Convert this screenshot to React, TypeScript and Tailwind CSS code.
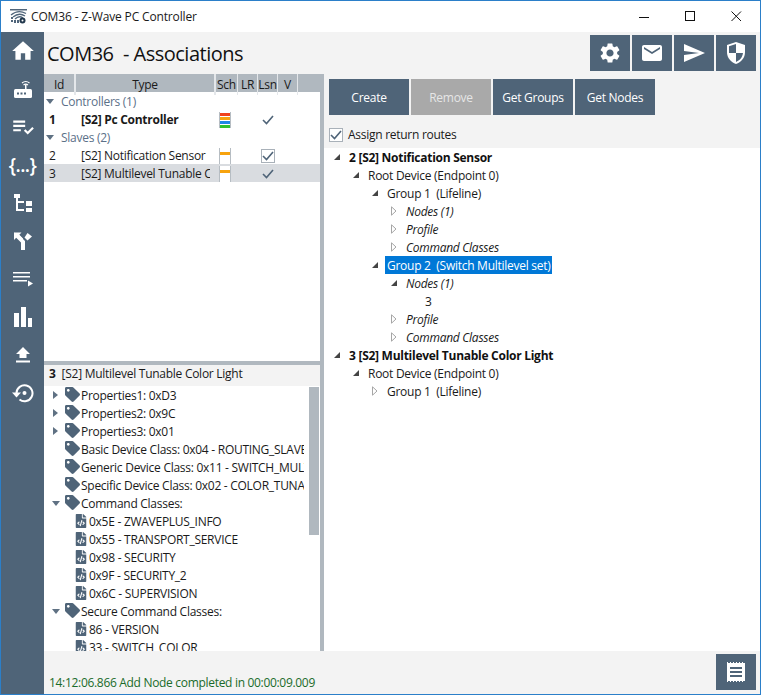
import React from 'react';
import { MdHome, MdPlaylistAddCheck, MdSettings, MdEmail, MdSend } from 'react-icons/md';
import { FaFileCode, FaTag } from 'react-icons/fa';

const FONT = "font-['Open_Sans','Noto_Sans',sans-serif]";

function Logo() {
  return (
    <svg width="17" height="15" viewBox="0 0 17 15" className="text-[#50657a]">
      <path d="M0 0h17v1.500H0z" fill="currentColor" />
      <path d="M1 6 Q8 0 16 4.500 M3 8 Q9 3 15 7 M5 10 Q9 6 13 9" stroke="currentColor" strokeWidth="1.300" fill="none" />
      <path d="M1 8h2v2H1zM1 11h2v2H1zM4 11h2v3H4zM7 11h2v3H7z" fill="currentColor" />
      <circle cx="12.500" cy="11.500" r="3" fill="#22384d" />
      <circle cx="12.500" cy="11.500" r="1" fill="white" />
    </svg>
  );
}

function TitleBar() {
  return (
    <div className="flex h-[31px] shrink-0 items-center bg-white">
      <div className="ml-[9px] mr-[4px] flex"><Logo /></div>
      <span className="text-[12px] tracking-[-0.15px] text-[#1a1a1a]">COM36 - Z-Wave PC Controller</span>
      <div className="ml-auto mr-[1px] flex">
        <svg width="46" height="31" viewBox="0 0 46 31"><path d="M18 16.500h10" stroke="#111" /></svg>
        <svg width="46" height="31" viewBox="0 0 46 31"><rect x="18.500" y="10.500" width="9" height="9" fill="none" stroke="#111" /></svg>
        <svg width="46" height="31" viewBox="0 0 46 31"><path d="M18.500 10.500l9.500 9.500m0-9.500l-9.500 9.500" stroke="#111" /></svg>
      </div>
    </div>
  );
}

function RouterIcon() {
  return (
    <svg width="18" height="18" viewBox="0 0 18 18" fill="white">
      <rect x="0" y="9" width="18" height="9" rx="1.500" />
      <path d="M3 12.500h2v2H3zM6.500 12.500h2v2h-2zM10 12.500h2v2h-2z" fill="#4f6478" />
      <rect x="11" y="4.500" width="1.500" height="4.500" />
      <path d="M8 3 Q11.700 0 15.500 3 M9.500 5 Q11.700 3.200 14 5" stroke="white" strokeWidth="1.100" fill="none" />
    </svg>
  );
}

function TreeIcon() {
  return (
    <svg width="18" height="18" viewBox="0 0 18 18" fill="white">
      <path d="M0 0h6v4H0zM2 4h2v13H2zM4 7h6v2H4zM4 15h6v2H4zM12 7h6v5h-6zM12 14h6v4h-6z" />
    </svg>
  );
}

function SplitIcon() {
  return (
    <svg width="18" height="18" viewBox="0 0 18 18" fill="white">
      <path d="M0 .500h7.500L5.300 2.700 9 6.400V18H7V7.500z" />
      <path d="M0 .500V8L2.200 5.800 7 10.500V18h4V9L4 2z" />
      <path d="M13.500 1 L18 4.500 L13.500 8.500 L10.500 5.500z" />
    </svg>
  );
}

function QueueIcon() {
  return (
    <svg width="20" height="15" viewBox="0 0 20 15" fill="white">
      <path d="M0 0h17v1.500H0zM0 4h17v1.500H0zM0 8h14v1.500H0z" />
      <path d="M15 8.500l5 3-5 3z" />
    </svg>
  );
}

function BarsIcon() {
  return (
    <svg width="18" height="20" viewBox="0 0 18 20" fill="white">
      <path d="M0 6h5v14H0zM7 0h5v20H7zM14 11h4v9h-4z" />
    </svg>
  );
}

function UploadIcon() {
  return (
    <svg width="14" height="16" viewBox="0 0 14 16" fill="white">
      <path d="M7 0l7 7h-3.500v4h-7V7H0z" />
      <path d="M0 13.500h14v2H0z" />
    </svg>
  );
}

function RestoreIcon() {
  return (
    <svg width="22" height="20" viewBox="0 0 22 20">
      <path d="M4.500 10 A8 8 0 1 1 7.500 16.500" stroke="white" strokeWidth="2" fill="none" />
      <path d="M0 9.500h9l-4.500 5z" fill="white" />
      <circle cx="12.500" cy="10" r="2" fill="white" />
    </svg>
  );
}

function Sidebar() {
  const cls = 'h-[38px] flex items-center justify-center';
  return (
    <div className="flex w-[43px] shrink-0 flex-col bg-[#4f6478] text-white">
      <div className={cls}><MdHome size={26} /></div>
      <div className={cls}><RouterIcon /></div>
      <div className={cls}><MdPlaylistAddCheck size={26} /></div>
      <div className={cls + ' text-[19px] font-semibold tracking-[-0.5px]'}>{'{...}'}</div>
      <div className={cls}><TreeIcon /></div>
      <div className={cls}><SplitIcon /></div>
      <div className={cls}><QueueIcon /></div>
      <div className={cls}><BarsIcon /></div>
      <div className={cls}><UploadIcon /></div>
      <div className={cls}><RestoreIcon /></div>
    </div>
  );
}

function ShieldIcon() {
  return (
    <svg width="20" height="24" viewBox="0 0 20 24">
      <path d="M10 1 L19 4 V11 C19 17 15 21 10 23 C5 21 1 17 1 11 V4 Z" fill="white" />
      <path d="M10 3 L3 5.300 V12 H10 Z M10 12 H17 C16.500 16.500 13.500 19.500 10 21 Z" fill="#4f6478" />
    </svg>
  );
}

function ReceiptIcon() {
  return (
    <svg width="18" height="20" viewBox="0 0 18 20">
      <path d="M0 1h18v18H0z" fill="white" />
      <path d="M0 0h1v1H0zM3 0h1v1H3zM6 0h1v1H6zM9 0h1v1H9zM12 0h1v1h-1zM15 0h1v1h-1zM0 19h1v1H0zM3 19h1v1H3zM6 19h1v1H6zM9 19h1v1H9zM12 19h1v1h-1zM15 19h1v1h-1z" fill="white" />
      <path d="M3 5h12v2H3zM3 9h12v2H3zM3 13h12v2H3z" fill="#4f6478" />
    </svg>
  );
}

function Header() {
  const btn = 'flex h-[36px] w-[40px] items-center justify-center bg-[#4f6478] text-white';
  return (
    <div className="flex h-[42px] shrink-0 items-start pl-[3px]">
      <h1 className="mt-[8px] whitespace-pre text-[20px] leading-[28px] tracking-[-0.5px] text-[#111]">COM36  - Associations</h1>
      <div className="ml-auto mr-[4px] mt-[3px] flex gap-[2px]">
        <div className={btn}><MdSettings size={24} /></div>
        <div className={btn}><MdEmail size={24} /></div>
        <div className={btn}><MdSend size={24} /></div>
        <div className={btn}><ShieldIcon /></div>
      </div>
    </div>
  );
}

function Check({ boxed }: { boxed?: boolean }) {
  const mark = (
    <svg width="12" height="10" viewBox="0 0 12 10">
      <path d="M1 5 L4.500 8.500 L11 1" stroke="#4f6478" strokeWidth="1.600" fill="none" />
    </svg>
  );
  if (boxed) return <span className="flex h-[14px] w-[14px] items-center justify-center border border-[#a9b1b9] bg-white">{mark}</span>;
  return mark;
}

function Signal({ full }: { full?: boolean }) {
  return (
    <span className="flex h-[16px] w-[12px] flex-col gap-[1px] border-x border-[#b6bdc3] bg-white pt-[1px]">
      {full ? (
        <>
          <i className="h-[3px] bg-[#f0421c]" />
          <i className="h-[3px] bg-[#f7a30f]" />
          <i className="h-[3px] bg-[#1e88e5]" />
          <i className="h-[3px] bg-[#2fc12f]" />
        </>
      ) : (
        <i className="mt-[3px] h-[3px] bg-[#f7a30f]" />
      )}
    </span>
  );
}

const cols = 'grid grid-cols-[32px_140px_22px_20px_20px_20px_1fr]';

function GroupRow({ label }: { label: string }) {
  return (
    <div className="flex h-[18px] items-center text-[#5b7088]">
      <svg width="8" height="5" viewBox="0 0 8 5" className="ml-[2px] mr-[7px]"><path d="M0 0h8L4 5z" fill="#5f7183" /></svg>
      <span className="pt-[1px]">{label}</span>
    </div>
  );
}

function DeviceRow({ id, name, bold, full, boxed, selected }: { id: string; name: string; bold?: boolean; full?: boolean; boxed?: boolean; selected?: boolean }) {
  return (
    <div className={`${cols} h-[18px] items-center ${selected ? 'bg-[#d9dce0]' : ''} ${bold ? 'font-bold' : ''} text-[#1a1a1a]`}>
      <span className="pl-[5px] pt-[1px]">{id}</span>
      <span className="overflow-hidden whitespace-nowrap pl-[5px] pt-[1px]"><span className="block w-[129px] overflow-hidden">{name}</span></span>
      <span className="flex justify-start pl-[3px]"><Signal full={full} /></span>
      <span />
      <span className="flex justify-center"><Check boxed={boxed} /></span>
      <span />
    </div>
  );
}

function DeviceTable() {
  return (
    <div className="min-h-0 flex-1 bg-white">
      <div className={`${cols} h-[18px] items-stretch bg-[#b0b8bf] text-center leading-[21px] text-[#1a1a1a]`}>
        <span className="border-r-2 border-[#e4e7ea]">Id</span>
        <span className="border-r-2 border-[#e4e7ea]">Type</span>
        <span className="border-r border-[#e4e7ea]">Sch</span>
        <span className="border-r border-[#e4e7ea]">LR</span>
        <span className="border-r border-[#e4e7ea]">Lsn</span>
        <span className="border-r border-[#e4e7ea]">V</span>
        <span />
      </div>
      <GroupRow label="Controllers (1)" />
      <DeviceRow id="1" name="[S2] Pc Controller" bold full />
      <GroupRow label="Slaves (2)" />
      <DeviceRow id="2" name="[S2] Notification Sensor" boxed />
      <DeviceRow id="3" name="[S2] Multilevel Tunable Color Light" selected />
    </div>
  );
}

function PropRow({ label, arrow }: { label: string; arrow?: 'right' | 'down' }) {
  return (
    <div className="flex h-[18px] items-center">
      <span className="flex w-[21px] shrink-0 justify-center pl-[2px]">
        {arrow === 'right' && <svg width="5" height="8" viewBox="0 0 5 8"><path d="M0 0l5 4-5 4z" fill="#5f7183" /></svg>}
        {arrow === 'down' && <svg width="8" height="5" viewBox="0 0 8 5"><path d="M0 0h8L4 5z" fill="#5f7183" /></svg>}
      </span>
      <FaTag size={15} className="mb-[2px] mr-[1px] shrink-0 text-[#4f6478]" />
      <span className="whitespace-nowrap pt-[2px] text-[#1a1a1a]">{label}</span>
    </div>
  );
}

function ClassRow({ label }: { label: string }) {
  return (
    <div className="flex h-[18px] items-center whitespace-nowrap pl-[30px] text-[#1a1a1a]">
      <FaFileCode size={14} className="mr-[1px] text-[#4f6478]" />
      <span className="pt-[2px]">{label}</span>
    </div>
  );
}

function PropertyList() {
  return (
    <div className="relative min-h-0 flex-1 overflow-hidden bg-white">
      <div className="h-full w-[260px] overflow-hidden">
        <PropRow label="Properties1: 0xD3" arrow="right" />
        <PropRow label="Properties2: 0x9C" arrow="right" />
        <PropRow label="Properties3: 0x01" arrow="right" />
        <PropRow label="Basic Device Class: 0x04 - ROUTING_SLAVE" />
        <PropRow label="Generic Device Class: 0x11 - SWITCH_MULTILEVEL" />
        <PropRow label="Specific Device Class: 0x02 - COLOR_TUNABLE" />
        <PropRow label="Command Classes:" arrow="down" />
        <ClassRow label="0x5E - ZWAVEPLUS_INFO" />
        <ClassRow label="0x55 - TRANSPORT_SERVICE" />
        <ClassRow label="0x98 - SECURITY" />
        <ClassRow label="0x9F - SECURITY_2" />
        <ClassRow label="0x6C - SUPERVISION" />
        <PropRow label="Secure Command Classes:" arrow="down" />
        <ClassRow label="86 - VERSION" />
        <ClassRow label="33 - SWITCH_COLOR" />
      </div>
      <div className="absolute right-[1px] top-[1px] h-[148px] w-[10px] bg-[#b0b8bf]" />
    </div>
  );
}

function LeftPanel() {
  return (
    <div className="flex w-[280px] shrink-0 flex-col border-r-4 border-[#b0b8bf]">
      <DeviceTable />
      <div className="h-[4px] shrink-0 bg-[#b0b8bf]" />
      <div className="flex h-[21px] shrink-0 items-center bg-[#f3f3f3] pb-[3px] pl-[5px] text-[#1a1a1a]">
        <b className="mr-[6px]">3</b>[S2] Multilevel Tunable Color Light
      </div>
      <div className="flex h-[265px] shrink-0 flex-col"><PropertyList /></div>
    </div>
  );
}

type Node = { label: string; level: number; arrow?: 'open' | 'closed'; bold?: boolean; italic?: boolean; selected?: boolean };

const TREE: Node[] = [
  { label: '2 [S2] Notification Sensor', level: 0, arrow: 'open', bold: true },
  { label: 'Root Device (Endpoint 0)', level: 1, arrow: 'open' },
  { label: 'Group 1  (Lifeline)', level: 2, arrow: 'open' },
  { label: 'Nodes (1)', level: 3, arrow: 'closed', italic: true },
  { label: 'Profile', level: 3, arrow: 'closed', italic: true },
  { label: 'Command Classes', level: 3, arrow: 'closed', italic: true },
  { label: 'Group 2  (Switch Multilevel set)', level: 2, arrow: 'open', selected: true },
  { label: 'Nodes (1)', level: 3, arrow: 'open', italic: true },
  { label: '3', level: 4 },
  { label: 'Profile', level: 3, arrow: 'closed', italic: true },
  { label: 'Command Classes', level: 3, arrow: 'closed', italic: true },
  { label: '3 [S2] Multilevel Tunable Color Light', level: 0, arrow: 'open', bold: true },
  { label: 'Root Device (Endpoint 0)', level: 1, arrow: 'open' },
  { label: 'Group 1  (Lifeline)', level: 2, arrow: 'closed' },
];

function TreeRow({ node }: { node: Node }) {
  return (
    <div className="flex h-[18px] items-center" style={{ paddingLeft: node.level * 19 + 9 }}>
      <span className="flex w-[16px] shrink-0 items-center">
        {node.arrow === 'open' && <svg width="8" height="8" viewBox="0 0 8 8"><path d="M7 1v6H1z" fill="#444" /></svg>}
        {node.arrow === 'closed' && <svg width="6" height="10" viewBox="0 0 6 10" className="ml-[1px]"><path d="M.5 .8l4.500 4.200-4.500 4.200z" fill="white" stroke="#a6a6a6" /></svg>}
      </span>
      <span className={`-ml-[2px] h-[18px] whitespace-pre px-[2px] leading-[19px] ${node.bold ? 'font-bold text-[#111]' : 'text-[#1a1a1a]'} ${node.italic ? 'italic' : ''} ${node.selected ? 'bg-[#0078d7] text-white' : ''}`}>
        {node.label}
      </span>
    </div>
  );
}

function RightPanel() {
  const btn = 'flex h-[36px] w-[80px] items-center justify-center pt-[2px] text-white';
  return (
    <div className="flex min-w-0 flex-1 flex-col">
      <div className="flex h-[74px] shrink-0 flex-col pl-[5px] pt-[5px]">
        <div className="flex gap-[2px]">
          <div className={`${btn} bg-[#4f6478]`}>Create</div>
          <div className={`${btn} bg-[#a9a9a9] !text-[#e6e6e6]`}>Remove</div>
          <div className={`${btn} bg-[#4f6478]`}>Get Groups</div>
          <div className={`${btn} bg-[#4f6478]`}>Get Nodes</div>
        </div>
        <div className="mt-[11px] flex items-center gap-[5px] text-[#1a1a1a]">
          <Check boxed />
          <span>Assign return routes</span>
        </div>
      </div>
      <div className="flex-1 bg-white">
        {TREE.map((n, i) => <TreeRow key={i} node={n} />)}
      </div>
    </div>
  );
}

export default function App() {
  return (
    <div className={`${FONT} flex h-[695px] w-[761px] flex-col overflow-hidden border border-[#2b7fc9] bg-[#f3f3f3] text-[12px] tracking-[-0.27px]`}>
      <TitleBar />
      <div className="flex min-h-0 flex-1">
        <Sidebar />
        <div className="flex min-w-0 flex-1 flex-col">
          <Header />
          <div className="flex min-h-0 flex-1">
            <LeftPanel />
            <RightPanel />
          </div>
          <div className="flex h-[43px] shrink-0 items-start">
            <span className="mt-[23px] pl-[5px] tracking-[-0.31px] text-[#1a6b2a]">14:12:06.866 Add Node completed in 00:00:09.009</span>
            <div className="ml-auto mr-[4px] mt-[3px] flex h-[36px] w-[40px] items-center justify-center bg-[#4f6478]"><ReceiptIcon /></div>
          </div>
        </div>
      </div>
    </div>
  );
}
